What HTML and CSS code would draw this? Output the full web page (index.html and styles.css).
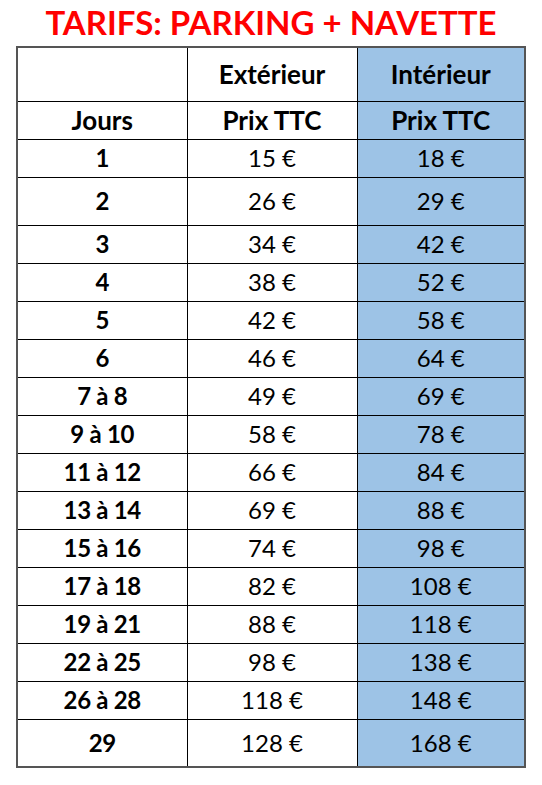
FILE: index.html
```html
<!DOCTYPE html>
<html lang="fr">
<head>
<meta charset="utf-8">
<title>Tarifs parking + navette</title>
<link rel="stylesheet" href="styles.css">
</head>
<body>
<div class="page">
  <h1 class="title">TARIFS: PARKING + NAVETTE</h1>
  <table class="tarifs">
    <colgroup>
      <col class="c1"><col class="c2"><col class="c3">
    </colgroup>
    <tbody>
      <tr class="h1row"><td></td><th class="head">Extérieur</th><th class="head blue">Intérieur</th></tr>
      <tr><th class="head">Jours</th><th class="head">Prix TTC</th><th class="head blue">Prix TTC</th></tr>
      <tr><th>1</th><td>15 €</td><td class="blue">18 €</td></tr>
      <tr class="tall"><th>2</th><td>26 €</td><td class="blue">29 €</td></tr>
      <tr><th>3</th><td>34 €</td><td class="blue">42 €</td></tr>
      <tr><th>4</th><td>38 €</td><td class="blue">52 €</td></tr>
      <tr><th>5</th><td>42 €</td><td class="blue">58 €</td></tr>
      <tr><th>6</th><td>46 €</td><td class="blue">64 €</td></tr>
      <tr><th>7 à 8</th><td>49 €</td><td class="blue">69 €</td></tr>
      <tr><th>9 à 10</th><td>58 €</td><td class="blue">78 €</td></tr>
      <tr><th>11 à 12</th><td>66 €</td><td class="blue">84 €</td></tr>
      <tr><th>13 à 14</th><td>69 €</td><td class="blue">88 €</td></tr>
      <tr><th>15 à 16</th><td>74 €</td><td class="blue">98 €</td></tr>
      <tr><th>17 à 18</th><td>82 €</td><td class="blue">108 €</td></tr>
      <tr><th>19 à 21</th><td>88 €</td><td class="blue">118 €</td></tr>
      <tr><th>22 à 25</th><td>98 €</td><td class="blue">138 €</td></tr>
      <tr><th>26 à 28</th><td>118 €</td><td class="blue">148 €</td></tr>
      <tr class="tall"><th>29</th><td>128 €</td><td class="blue">168 €</td></tr>
    </tbody>
  </table>
</div>
</body>
</html>
```

FILE: styles.css
```css
html, body {
  margin: 0;
  padding: 0;
  background: #ffffff;
}
.page {
  width: 542px;
  height: 785px;
  display: flex;
  flex-direction: column;
  align-items: center;
  font-family: Lato, "Liberation Sans", sans-serif;
  color: #000;
}
.title {
  margin: 0;
  height: 46px;
  line-height: 44px;
  font-size: 33px;
  font-weight: 700;
  color: #ff0000;
  text-align: center;
  white-space: nowrap;
}
.tarifs {
  border-collapse: collapse;
  table-layout: fixed;
  width: 508px;
  border: 2px solid #555;
}
.c1 { width: 170px; }
.c2 { width: 170px; }
.c3 { width: 168px; }
.tarifs tr { height: 38px; }
.tarifs tr.h1row { height: 54px; }
.tarifs tr.tall { height: 48px; }
.tarifs td, .tarifs th {
  border: 1px solid #000;
  padding: 0;
  text-align: center;
  vertical-align: middle;
  font-size: 24px;
  line-height: 1;
}
.tarifs th { font-weight: 700; letter-spacing: -0.3px; }
.tarifs th.head { font-size: 26px; letter-spacing: 0; }
.tarifs td { font-weight: 400; }
.tarifs .blue { background: #9dc3e6; }
```
